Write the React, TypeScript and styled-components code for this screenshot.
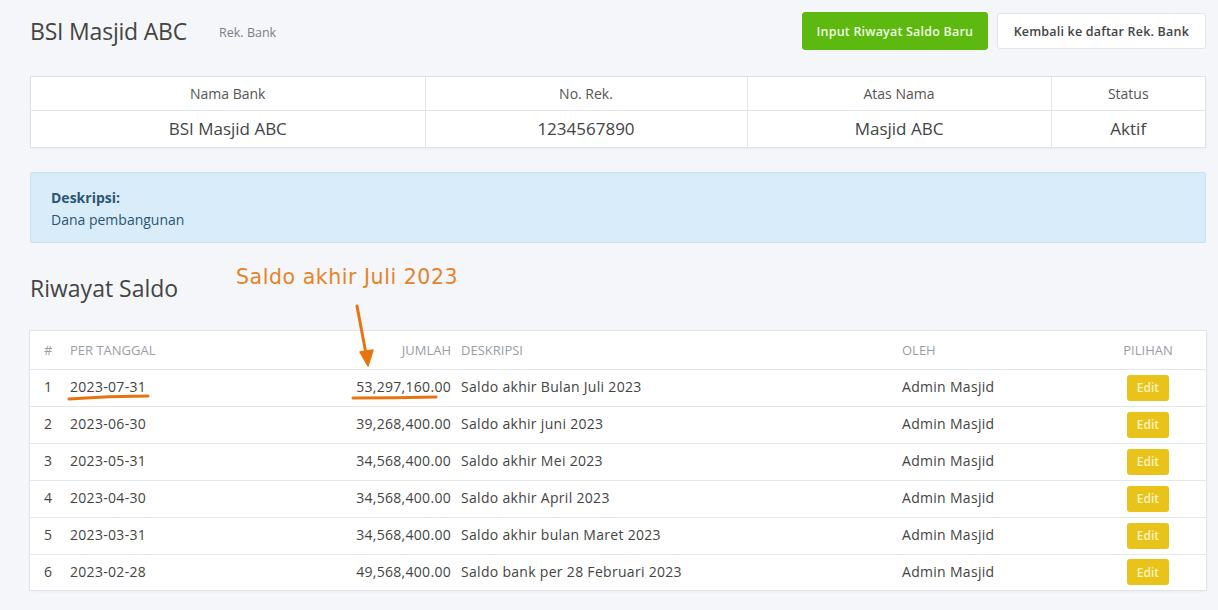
import React from "react";
import styled, { createGlobalStyle } from "styled-components";

const Global = createGlobalStyle`
  html, body { margin: 0; padding: 0; background: #f5f6f9; }
  body { font-family: "Open Sans", "Noto Sans", sans-serif; color: #555; }
  * { box-sizing: border-box; }
`;

const Page = styled.div`
  position: relative;
  width: 1218px;
  height: 610px;
  padding: 12px 12px 0 30px;
  overflow: hidden;
`;

const TopBar = styled.div`
  display: flex;
  align-items: center;
  height: 38px;
`;

const Title = styled.h1`
  margin: 0;
  font-size: 23px;
  font-weight: 400;
  color: #444;
  letter-spacing: -0.2px;
`;

const Sub = styled.span`
  margin-left: 32px;
  font-size: 12.5px;
  color: #7a7f87;
  padding-top: 2px;
`;

const Actions = styled.div`
  margin-left: auto;
  display: flex;
  gap: 9px;
  align-items: center;
`;

const Button = styled.button<{ $variant: "green" | "white" }>`
  font-family: inherit;
  font-size: 12.5px;
  font-weight: 600;
  letter-spacing: 0.2px;
  height: ${(p) => (p.$variant === "green" ? "38px" : "36px")};
  padding: 0 ${(p) => (p.$variant === "green" ? "13.5px" : "16px")};
  border-radius: 3px;
  cursor: pointer;
  ${(p) =>
    p.$variant === "green"
      ? `background:#5db80f; color:#eefbe0; border:1px solid #5db80f;`
      : `background:#fff; color:#444; border:1px solid #e3e5e9;`}
`;

const InfoCard = styled.table`
  margin-top: 27px;
  width: 1174px;
  margin-left: 1px;
  border-collapse: collapse;
  background: #fff;
  box-shadow: 0 0 0 1px #dfe2e7, 0 1px 3px rgba(0, 0, 0, 0.08);
  table-layout: fixed;
`;

const InfoHead = styled.th`
  height: 33px;
  font-weight: 400;
  font-size: 14px;
  color: #555;
  text-align: center;
  border-right: 1px solid #e2e5ea;
  border-bottom: 1px solid #e2e5ea;
  &:last-child { border-right: none; }
`;

const InfoCell = styled.td`
  height: 37px;
  font-size: 17px;
  color: #444;
  text-align: center;
  border-right: 1px solid #e2e5ea;
  &:last-child { border-right: none; }
`;

const Alert = styled.div`
  margin-top: 25px;
  width: 1176px;
  height: 71px;
  background: #d9ecfa;
  border: 1px solid #c9e0f1;
  border-radius: 2px;
  padding: 14px 20px;
  color: #2b5575;
  font-size: 14px;
  line-height: 22px;
`;

const AlertLabel = styled.div`
  font-weight: 700;
`;

const SectionTitle = styled.h2`
  margin: 30px 0 0;
  height: 58px;
  font-size: 23px;
  font-weight: 400;
  color: #444;
  line-height: 30px;
`;

const HistoryTable = styled.table`
  width: 1176px;
  border-collapse: collapse;
  background: #fff;
  box-shadow: 0 0 0 1px #e0e3e8, 0 1px 3px rgba(0, 0, 0, 0.07);
  table-layout: fixed;
  font-size: 14px;
`;

const Th = styled.th<{ $align?: string }>`
  height: 38px;
  padding: 0 5px;
  font-weight: 400;
  font-size: 13px;
  color: #999ea6;
  text-transform: uppercase;
  text-align: ${(p) => p.$align || "left"};
  border-bottom: 1px solid #e4e7eb;
  &:first-child { padding-left: 14px; }
  &:last-child { padding-right: 14px; }
`;

const Td = styled.td<{ $align?: string }>`
  height: 37px;
  padding: 0 5px 2px;
  color: #444;
  letter-spacing: 0.3px;
  text-align: ${(p) => p.$align || "left"};
  border-bottom: 1px solid #e4e7eb;
  tr:last-child > & { border-bottom: none; height: 36px; }
  &:first-child { padding-left: 14px; }
  &:last-child { padding-right: 14px; }
`;

const EditBtn = styled.button`
  font-family: inherit;
  font-size: 12px;
  font-weight: 600;
  color: #fdf3c0;
  background: #e9c21a;
  border: none;
  border-radius: 3px;
  width: 42px;
  height: 26px;
  padding: 0;
  margin-top: 2px;
`;

const Annotation = styled.div`
  position: absolute;
  left: 236px;
  top: 265px;
  font-family: "DejaVu Sans", sans-serif;
  font-size: 20.5px;
  color: #e6832a;
  letter-spacing: 0.55px;
`;

const Overlay = styled.svg`
  position: absolute;
  left: 0;
  top: 0;
  pointer-events: none;
`;

const rows = [
  ["1", "2023-07-31", "53,297,160.00", "Saldo akhir Bulan Juli 2023"],
  ["2", "2023-06-30", "39,268,400.00", "Saldo akhir juni 2023"],
  ["3", "2023-05-31", "34,568,400.00", "Saldo akhir Mei 2023"],
  ["4", "2023-04-30", "34,568,400.00", "Saldo akhir April 2023"],
  ["5", "2023-03-31", "34,568,400.00", "Saldo akhir bulan Maret 2023"],
  ["6", "2023-02-28", "49,568,400.00", "Saldo bank per 28 Februari 2023"],
];

export default function App() {
  return (
    <>
      <Global />
      <Page>
        <TopBar>
          <Title>BSI Masjid ABC</Title>
          <Sub>Rek. Bank</Sub>
          <Actions>
            <Button $variant="green">Input Riwayat Saldo Baru</Button>
            <Button $variant="white">Kembali ke daftar Rek. Bank</Button>
          </Actions>
        </TopBar>

        <InfoCard>
          <colgroup>
            <col style={{ width: 394 }} />
            <col style={{ width: 322 }} />
            <col style={{ width: 304 }} />
            <col />
          </colgroup>
          <thead>
            <tr>
              <InfoHead>Nama Bank</InfoHead>
              <InfoHead>No. Rek.</InfoHead>
              <InfoHead>Atas Nama</InfoHead>
              <InfoHead>Status</InfoHead>
            </tr>
          </thead>
          <tbody>
            <tr>
              <InfoCell>BSI Masjid ABC</InfoCell>
              <InfoCell>1234567890</InfoCell>
              <InfoCell>Masjid ABC</InfoCell>
              <InfoCell>Aktif</InfoCell>
            </tr>
          </tbody>
        </InfoCard>

        <Alert>
          <AlertLabel>Deskripsi:</AlertLabel>
          <div>Dana pembangunan</div>
        </Alert>

        <SectionTitle>Riwayat Saldo</SectionTitle>

        <HistoryTable>
          <colgroup>
            <col style={{ width: 35 }} />
            <col style={{ width: 235 }} />
            <col style={{ width: 156 }} />
            <col style={{ width: 441 }} />
            <col style={{ width: 202 }} />
            <col />
          </colgroup>
          <thead>
            <tr>
              <Th>#</Th>
              <Th>Per Tanggal</Th>
              <Th $align="right">Jumlah</Th>
              <Th>Deskripsi</Th>
              <Th>Oleh</Th>
              <Th $align="center">Pilihan</Th>
            </tr>
          </thead>
          <tbody>
            {rows.map((r) => (
              <tr key={r[0]}>
                <Td>{r[0]}</Td>
                <Td>{r[1]}</Td>
                <Td $align="right">{r[2]}</Td>
                <Td>{r[3]}</Td>
                <Td>Admin Masjid</Td>
                <Td $align="center">
                  <EditBtn>Edit</EditBtn>
                </Td>
              </tr>
            ))}
          </tbody>
        </HistoryTable>

        <Annotation>Saldo akhir Juli 2023</Annotation>
        <Overlay width="1218" height="610" viewBox="0 0 1218 610">
          <g stroke="#e8740f" strokeWidth="3" fill="none" strokeLinecap="round">
            <path d="M69 399 Q108 396 148 396" />
            <path d="M353 398 Q395 398 436 397" />
            <path d="M357 306 L366 354" />
          </g>
          <path d="M360 352 L368 366 L373 350 Z" fill="#e8740f" stroke="#e8740f" strokeWidth="1.5" strokeLinejoin="round" />
        </Overlay>
      </Page>
    </>
  );
}
